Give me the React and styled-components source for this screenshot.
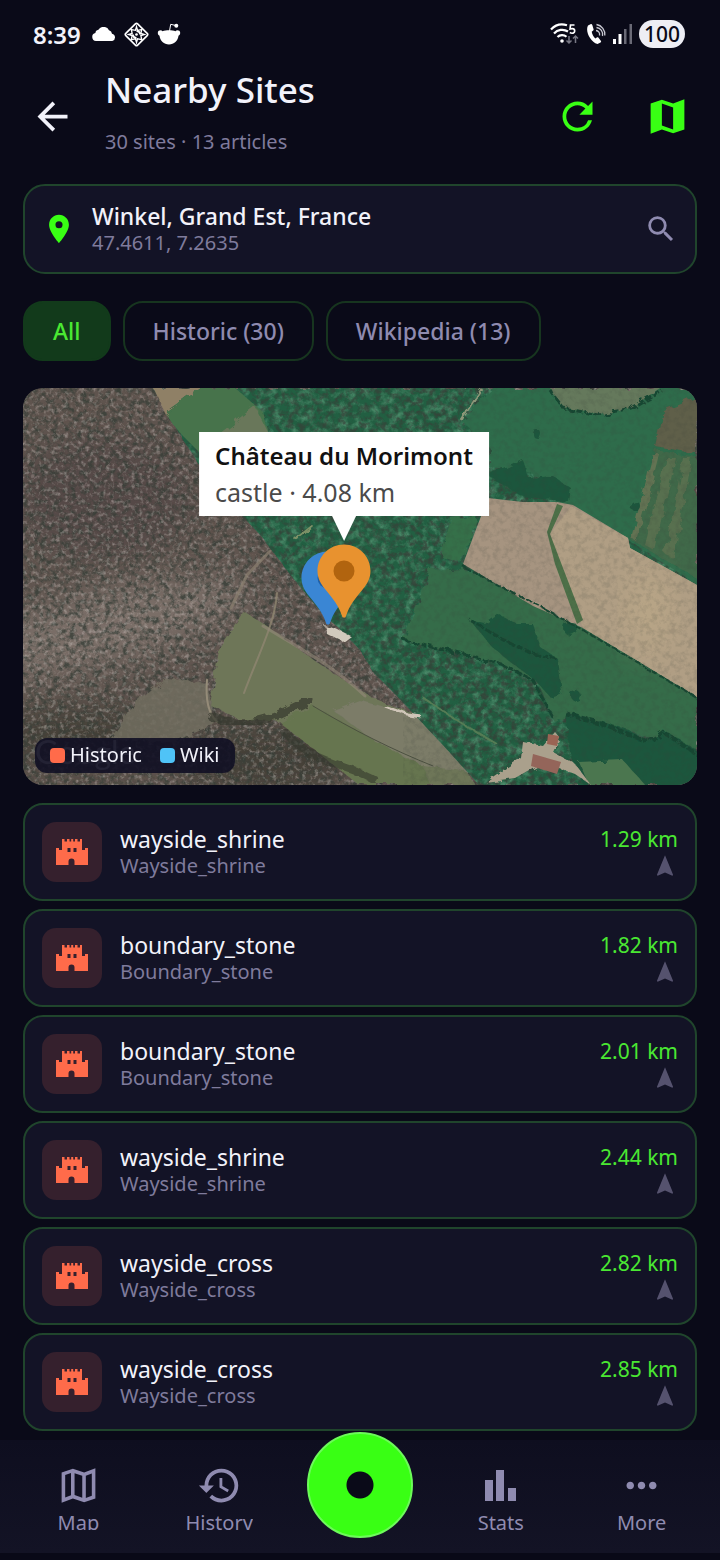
import React, { useState } from 'react';
import styled, { createGlobalStyle } from 'styled-components';
import {
  MdArrowBack,
  MdRefresh,
  MdPlace,
  MdSearch,
  MdNavigation,
  MdHistory,
  MdMoreHoriz,
} from 'react-icons/md';

const SITES = [
  { id: 1, name: 'wayside_shrine', type: 'Wayside_shrine', distance: 1.29 },
  { id: 2, name: 'boundary_stone', type: 'Boundary_stone', distance: 1.82 },
  { id: 3, name: 'boundary_stone', type: 'Boundary_stone', distance: 2.01 },
  { id: 4, name: 'wayside_shrine', type: 'Wayside_shrine', distance: 2.44 },
  { id: 5, name: 'wayside_cross', type: 'Wayside_cross', distance: 2.82 },
  { id: 6, name: 'wayside_cross', type: 'Wayside_cross', distance: 2.85 },
];

const FILTERS = ['All', 'Historic (30)', 'Wikipedia (13)'];

const MapIcon = ({ outlined }) => (
  <svg width={45} height={45} viewBox="0 0 24 24" fill="currentColor" aria-hidden="true">
    {outlined ? (
      <path
        fillRule="evenodd"
        d="M15 5.1 9 3 3 5.02v16.2l6-2.33 6 2.1 6-2.02V2.77L15 5.1zM8 17.15l-3.1 1.2V6.4L8 5.36v11.79zm6 1.35-4.1-1.43V5.42L14 6.85V18.5zm5.1-.98-3.2 1.1V6.83l3.2-1.24v11.93z"
      />
    ) : (
      <path fillRule="evenodd" d="M15 5.1 9 3 3 5.02v16.2l6-2.33 6 2.1 6-2.02V2.77L15 5.1zm0 13.79-6-2.11V5.11l6 2.11v11.67z" />
    )}
  </svg>
);

const StatsIcon = () => (
  <svg width={45} height={45} viewBox="0 0 45 45" fill="currentColor" aria-hidden="true">
    <path d="M7 17h8v21H7zM18 7h8v31h-8zM30 25h8v13h-8z" />
  </svg>
);

const CastleIcon = () => (
  <svg width={32} height={26} viewBox="0 0 32 26" fill="#ff6b4a" aria-hidden="true">
    <path
      fillRule="evenodd"
      d="M6 0h2.500v2.500H11V0h2.500v2.500h1.700V0h2v2.500H19V0h2.500v2.500H24V0h2v11h3V9h3v17H18.500v-3.500a3 3 0 0 0-6 0V26H0V9h3v2h3V0zM11.500 9v4h3V9h-3zM17.500 9v4h3V9h-3z"
    />
  </svg>
);

const CloudIcon = () => (
  <svg width={24} height={14} viewBox="0 0 24 14" fill="#fff" aria-hidden="true">
    <path d="M4 14a4 4 0 0 1-.6-7.900 3.600 3.600 0 0 1 3-3.300A6 6 0 0 1 17 3.300a4 4 0 0 1 3 3.500A3.700 3.700 0 0 1 20.300 14z" />
  </svg>
);

const DiamondIcon = () => (
  <svg width={25} height={25} viewBox="0 0 24 24" fill="none" stroke="#fff" aria-hidden="true">
    <rect x="4" y="4" width="16" height="16" rx="1.500" strokeWidth="1.600" transform="rotate(45 12 12)" />
    <path d="M12 4.500 13 8l4-.8-.8 3.800 3.300 1-3.300 1 .8 4-4-.8-1 3.300-1-3.300-4 .8.800-4-3.300-1 3.300-1L7 7.200l4 .8z" strokeWidth="1.300" />
    <path d="M12 8.500a3.500 3.500 0 0 1 3.500 3.500M12 15.500A3.500 3.500 0 0 1 8.500 12" strokeWidth="2" />
    <circle cx="12" cy="12" r="1.300" fill="#fff" stroke="none" />
  </svg>
);

const AlienIcon = () => (
  <svg width={24} height={22} viewBox="0 0 24 22" fill="#fff" aria-hidden="true">
    <path d="M.8 9.800C1 7 4.500 6.800 5.500 8.200 9 7 15 7 18.500 8.200c1-1.400 4.500-1.200 4.700 1.600.1 1.500-.8 2.500-1.700 3C21 18 17 21.500 12 21.500S3 18 2.500 12.800C1.600 12.300.7 11.300.8 9.800z" />
    <circle cx="19.300" cy="2.800" r="2" />
    <path d="m12.500 8 1.200-6.700 5 1.200" fill="none" stroke="#fff" strokeWidth="1" />
  </svg>
);

const WifiIcon = () => (
  <svg width={29} height={24} viewBox="0 0 29 24" fill="none" stroke="#fff" strokeWidth="2.200" aria-hidden="true">
    <path d="M1 7.500a15.500 15.500 0 0 1 16-4.200M4 11.500a11 11 0 0 1 14-2M7.500 15a6.500 6.500 0 0 1 9-.2" />
    <circle cx="12" cy="19" r="1.800" fill="#fff" stroke="none" />
    <path d="M24.500 3H20.500l-.4 4c3-1 4.600 0 4.600 2s-2.500 3-4.900 1.600" strokeWidth="1.700" />
    <path d="M19 14v7M16.500 18.500 19 21l2.500-2.500M25.500 21v-7M23 16.500l2.500-2.500 2.500 2.500" stroke="#777783" strokeWidth="1.500" />
  </svg>
);

const CallIcon = () => (
  <svg width={20} height={22} viewBox="0 0 20 22" aria-hidden="true">
    <path
      d="M4.500 1.200 2 2.600C-1 7.500 4 19 11.500 21l3-1.400c.8-.5.8-1.200.3-1.900l-2.300-2.900c-.5-.6-1.200-.6-1.800-.2l-1.200.8C7.600 14 6 11 5.700 8.700l1.200-.9c.7-.4.8-1 .6-1.700L6.300 2c-.3-.9-1-1.200-1.800-.8z"
      fill="#fff"
    />
    <path d="M10 7.500a4 4 0 0 1 3.500 5M10.500 4.500a7 7 0 0 1 6 8.500M10.500 1.500a10 10 0 0 1 8.300 11" fill="none" stroke="#c9c9d2" strokeWidth="1.300" />
  </svg>
);

const SignalIcon = () => (
  <svg width={19} height={20} viewBox="0 0 19 20" aria-hidden="true">
    <path d="M0 15h3v5H0zM5.500 10h3v10h-3z" fill="#fff" />
    <path d="M11 5h2.500v15H11zM16.500 0H19v20h-2.500z" fill="#6a6a76" />
  </svg>
);

const Pin = ({ fill, dot }) => (
  <svg width={54} height={74} viewBox="0 0 54 74" aria-hidden="true">
    <path d="M27 .5C12.400.5.5 12.300.5 27c0 7 3 12.500 7.500 18 6 7.500 12 14 15.500 23l1.700 4.500c.6 1.600 3 1.600 3.600 0L30.500 68C34 59 40 52.500 46 45c4.500-5.500 7.500-11 7.500-18C53.500 12.300 41.600.5 27 .5z" fill={fill} />
    <circle cx="27" cy="27" r="10.500" fill={dot} />
  </svg>
);

const WOODS =
  'M130 0H674V397H456L430 368 404 340 374 308 350 284 337 262 316 240 300 226 283 206 262 180 238 148 216 124 184 88 160 52z';

// Aerial view: woods, meadows and ploughed fields under a grain texture.
const Terrain = () => (
  <TerrainSvg viewBox="0 0 674 397" preserveAspectRatio="xMidYMid slice" role="img" aria-label="Satellite map">
    <defs>
      <filter id="grain" x="0" y="0" width="100%" height="100%">
        <feTurbulence type="fractalNoise" baseFrequency="0.17" numOctaves="4" seed="7" />
        <feColorMatrix values="0 0 0 0 0.04  0 0 0 0 0.05  0 0 0 0 0.04  3.200 0 0 0 -1.350" />
      </filter>
      <filter id="glint" x="0" y="0" width="100%" height="100%">
        <feTurbulence type="fractalNoise" baseFrequency="0.24" numOctaves="3" seed="21" />
        <feColorMatrix values="0 0 0 0 0.66  0 0 0 0 0.6  0 0 0 0 0.57  0 2.800 0 0 -1.350" />
      </filter>
      <filter id="leaf" x="0" y="0" width="100%" height="100%">
        <feTurbulence type="fractalNoise" baseFrequency="0.12" numOctaves="4" seed="4" />
        <feColorMatrix values="0 0 0 0 0.18  0 0 0 0 0.47  0 0 0 0 0.29  0 2.400 0 0 -1" />
      </filter>
      <filter id="rough" x="-5%" y="-5%" width="110%" height="110%">
        <feTurbulence type="fractalNoise" baseFrequency="0.09" numOctaves="3" seed="3" />
        <feDisplacementMap in="SourceGraphic" scale="9" />
      </filter>
      <filter id="haze" x="-30%" y="-30%" width="160%" height="160%">
        <feGaussianBlur stdDeviation="16" />
      </filter>
      <clipPath id="woods">
        <path d={WOODS} />
      </clipPath>
    </defs>

    <rect width="674" height="397" fill="#5f544e" />
    <g filter="url(#haze)">
      <ellipse cx="80" cy="240" rx="150" ry="36" fill="#7a6e68" transform="rotate(-14 80 240)" />
      <ellipse cx="80" cy="110" rx="90" ry="60" fill="#544a46" />
      <ellipse cx="60" cy="350" rx="90" ry="30" fill="#453f38" />
      <ellipse cx="240" cy="372" rx="90" ry="34" fill="#453f37" />
    </g>
    <rect width="674" height="397" filter="url(#grain)" opacity="0.800" />
    <rect width="674" height="397" filter="url(#glint)" opacity="0.400" />

    <g filter="url(#rough)">
      <path d="M144 290 184 296 192 336 150 354 88 350 112 316z" fill="#716d5f" opacity="0.850" />
      <path d="M222 224 244 238 274 260 314 288 350 310 403 330 426 356 452 397H336L297 366 257 334 214 330 187 317 196 262z" fill="#6e7659" />
      <path d="M258 336 290 318 330 340 400 378 408 397H336L297 366z" fill="#66744f" />
      <path d="M336 312 403 332 450 384 400 378 350 352 310 322z" fill="#7b7b68" />
    </g>
    <g fill="none" strokeLinecap="round">
      <path d="M247 163 224 187 208 220" stroke="#8b8070" strokeWidth="3" opacity="0.700" />
      <path d="M254 205c-2 30-18 60-33 100" stroke="#8f8671" strokeWidth="2" opacity="0.800" />
      <path d="M184 292c-2 22 2 34 10 42" stroke="#948b78" strokeWidth="2" />
      <path d="M240 238c40 24 70 40 102 70" stroke="#94887a" strokeWidth="3" opacity="0.600" />
      <path d="M290 318c40 24 80 44 120 60" stroke="#4c5140" strokeWidth="1" />
      <path d="M190 330c30 12 60 2 96-18" stroke="#36392d" strokeWidth="9" opacity="0.700" filter="url(#rough)" />
      <path d="M262 344c30 34 60 30 90 48" stroke="#36392d" strokeWidth="8" opacity="0.600" filter="url(#rough)" />
    </g>

    <path d={WOODS} fill="#215e43" filter="url(#rough)" />
    <g clipPath="url(#woods)">
      <rect x="120" width="554" height="397" filter="url(#leaf)" opacity="0.500" />
      <rect x="120" width="554" height="397" filter="url(#grain)" opacity="0.700" />
    </g>

    <g filter="url(#rough)">
      <path d="M130 0H178L142 26z" fill="#8f8066" />
      <path d="M178 0H212L240 24 246 46 200 46 200 76 176 64 158 46 142 26z" fill="#46734c" />
      <path d="M232 18 246 46H196z" fill="#69775a" />
      <path d="M468 0 440 34 467 60 467 80 500 84 537 96 537 114 605 152 674 197V0z" fill="#2d6c4b" />
      <path d="M527 0 540 20 575 26 605 22 637 0z" fill="#65795c" />
      <path d="M640 22 674 8V66L632 58z" fill="#5f5e48" />
      <path d="M633 62 674 70V190L608 152z" fill="#41694a" />
      <path d="M644 70h9l-22 92-9-5zM660 70h9l-18 100-9-4z" fill="#58704f" />
      <path d="M630 66h6l-22 88-6-4z" fill="#637353" />
      <path d="M428 130 455 128 440 175 418 168z" fill="#35704a" />
      <path d="M408 182 440 180 560 240 674 309V362L626 350 606 342 546 328 532 334 514 292 478 276 430 264 380 252z" fill="#366c4a" />
    </g>

    <path d="M465 110 500 114 534 114 550 117 605 150 607 160 674 197V309L620 276 560 240 510 218 440 176 452 144z" fill="#a69480" />
    <path d="M548 118 605 150 607 160 674 197V309L620 276 560 240 538 180 527 146z" fill="#b09e84" />
    <path d="M534 116 524 144 532 176 554 236 560 232 540 180 527 146 540 118z" fill="#4d7048" />
    <g filter="url(#haze)" opacity="0.400">
      <ellipse cx="626" cy="224" rx="20" ry="40" fill="#c8b38c" />
    </g>

    <g fill="#1f563c" filter="url(#rough)">
      <path d="M447 232 462 236 476 226 494 236 510 236 518 260 536 272 540 306 528 310 512 292 490 276 468 258z" />
      <path d="M466 88 500 72 506 90 530 88 548 100 546 114 498 108z" />
      <path d="M542 326 580 334 606 342 626 354 640 342 674 362V397H560L548 366z" />
      <circle cx="514" cy="46" r="4" />
      <circle cx="612" cy="118" r="5" />
      <circle cx="547" cy="240" r="7" />
      <circle cx="553" cy="308" r="5" />
    </g>
    <g fill="none" stroke="#184632" strokeDasharray="7 2" filter="url(#rough)">
      <path d="M380 252 430 264 478 276 510 292 530 330" strokeWidth="3" />
      <path d="M447 232 480 252 510 266 536 272" strokeWidth="3" />
      <path d="M440 178 480 200 520 220 560 242 620 278 674 310" strokeWidth="2" />
      <path d="M542 326 580 336 626 354 640 344 674 366" strokeWidth="4" />
      <path d="M527 2 540 20 575 27 608 20 638 2" strokeWidth="3" />
    </g>
    <rect x="380" width="294" height="397" filter="url(#grain)" opacity="0.140" />

    <g filter="url(#rough)">
      <path d="M556 374 600 372 622 397H566z" fill="#4c7650" />
      <path d="M500 354 520 358 532 344 537 350 530 364 552 376 568 397 552 386 520 374 492 390 462 394 498 370z" fill="#aaa08c" />
      <path d="M300 236 312 240 328 248 320 254 304 246z" fill="#d2cabd" />
      <path d="M362 318 384 326 398 328" fill="none" stroke="#cfc5b8" strokeWidth="3" />
      <path d="M400 310 440 336 474 356" fill="none" stroke="#557c54" strokeWidth="2" />
      <path d="M458 0 438 32" fill="none" stroke="#8c9678" strokeWidth="3" />
      <path d="M272 152 290 138" fill="none" stroke="#7c9066" strokeWidth="3" />
    </g>
    <path d="M510 366 538 374 534 386 508 378z" fill="#94655a" />
    <path d="M525 346 536 348 534 358 524 356z" fill="#9a6454" />
    <text x="12" y="376" fill="#fff" opacity="0.700" fontFamily="Lato, sans-serif" fontSize="32">
      Google
    </text>
  </TerrainSvg>
);

const SiteRow = ({ site }) => (
  <li>
    <Row href={`#site-${site.id}`}>
      <Tile>
        <CastleIcon />
      </Tile>
      <RowText>
        <SiteName>{site.name}</SiteName>
        <Muted>{site.type}</Muted>
      </RowText>
      <RowSide>
        <Distance>{site.distance.toFixed(2)} km</Distance>
        <MdNavigation size={26} color="#55526e" />
      </RowSide>
    </Row>
  </li>
);

const App = () => {
  const [filter, setFilter] = useState('All');

  return (
    <Screen>
      <GlobalStyle />
      <StatusBar>
        <StatusGroup $gap={8}>
          <Clock>8:39</Clock>
          <CloudIcon />
          <DiamondIcon />
          <AlienIcon />
        </StatusGroup>
        <StatusGroup $gap={7}>
          <WifiIcon />
          <CallIcon />
          <SignalIcon />
          <Battery>100</Battery>
        </StatusGroup>
      </StatusBar>

      <Header>
        <IconButton $color="#f2f2fa" aria-label="Back">
          <MdArrowBack size={45} />
        </IconButton>
        <Titles>
          <Title>Nearby Sites</Title>
          <Subtitle>30 sites · 13 articles</Subtitle>
        </Titles>
        <Actions>
          <IconButton $color="#39ff14" aria-label="Refresh">
            <MdRefresh size={45} />
          </IconButton>
          <IconButton $color="#39ff14" aria-label="Show map">
            <MapIcon />
          </IconButton>
        </Actions>
      </Header>

      <Content>
        <LocationCard>
          <MdPlace size={34} color="#39ff14" />
          <RowText>
            <Place>Winkel, Grand Est, France</Place>
            <Muted>47.4611, 7.2635</Muted>
          </RowText>
          <MdSearch size={34} color="#8f8bb0" />
        </LocationCard>

        <Chips>
          {FILTERS.map((label) => (
            <Chip key={label} $active={label === filter} aria-pressed={label === filter} onClick={() => setFilter(label)}>
              {label}
            </Chip>
          ))}
        </Chips>

        <MapCard>
          <Terrain />
          <Marker $x={-32} $y={163}>
            <Pin fill="#3a86d4" dot="#1f5fa5" />
          </Marker>
          <Marker $x={-16} $y={156}>
            <Pin fill="#e8922f" dot="#b1640f" />
          </Marker>
          <Callout>
            <CalloutTitle>Château du Morimont</CalloutTitle>
            <CalloutText>castle · 4.08 km</CalloutText>
          </Callout>
          <Legend>
            <LegendItem $color="#ff6b4a">Historic</LegendItem>
            <LegendItem $color="#4fc3f7">Wiki</LegendItem>
          </Legend>
        </MapCard>

        <List>
          {SITES.map((site) => (
            <SiteRow key={site.id} site={site} />
          ))}
        </List>
      </Content>

      <TabBar>
        <Tab href="#map">
          <MapIcon outlined />
          <TabLabel>Map</TabLabel>
        </Tab>
        <Tab href="#history">
          <MdHistory size={45} />
          <TabLabel>History</TabLabel>
        </Tab>
        <TabCenter>
          <Record aria-label="Record" />
        </TabCenter>
        <Tab href="#stats">
          <StatsIcon />
          <TabLabel>Stats</TabLabel>
        </Tab>
        <Tab href="#more">
          <MdMoreHoriz size={45} />
          <TabLabel>More</TabLabel>
        </Tab>
      </TabBar>
    </Screen>
  );
};

const GlobalStyle = createGlobalStyle`
  * {
    box-sizing: border-box;
  }
  body {
    margin: 0;
    background: #0a0a18;
    color: #f2f2fa;
    font-family: 'Noto Sans', 'Open Sans', sans-serif;
  }
  button {
    font-family: inherit;
    cursor: pointer;
  }
  svg {
    display: block;
    flex-shrink: 0;
  }
`;

const Screen = styled.div`
  display: flex;
  flex-direction: column;
  min-height: 100vh;
`;

const StatusBar = styled.div`
  display: flex;
  justify-content: space-between;
  align-items: center;
  height: 68px;
  padding: 0 35px 0 33px;
`;

const StatusGroup = styled.div`
  display: flex;
  align-items: center;
  gap: ${({ $gap }) => $gap}px;
`;

const Clock = styled.span`
  margin-right: 3px;
  font-size: 24px;
  font-weight: 600;
`;

const Battery = styled.span`
  padding: 0 5px;
  border-radius: 14px;
  background: #eeeef4;
  color: #0a0a18;
  font-size: 21px;
  font-weight: 500;
  line-height: 28px;
`;

const Header = styled.header`
  display: flex;
  align-items: center;
  padding: 0 30px;
`;

const IconButton = styled.button`
  display: flex;
  padding: 0;
  border: 0;
  background: none;
  color: ${({ $color }) => $color};
`;

const Titles = styled.div`
  flex: 1;
  margin-left: 30px;
  padding-bottom: 8px;
`;

const Title = styled.h1`
  margin: 0 0 16px;
  font-size: 35px;
  font-weight: 500;
  line-height: 44px;
`;

const Subtitle = styled.p`
  margin: 0;
  color: #7f7b9c;
  font-size: 20px;
  line-height: 28px;
`;

const Actions = styled.div`
  display: flex;
  gap: 45px;
`;

const Content = styled.main`
  flex: 1;
  padding: 20px 23px 9px;
`;

const LocationCard = styled.button`
  display: flex;
  align-items: center;
  width: 100%;
  padding: 16px 17px;
  border: 2px solid #20452c;
  border-radius: 22px;
  background: #131326;
  color: inherit;
  text-align: left;
`;

const RowText = styled.span`
  display: flex;
  flex: 1;
  flex-direction: column;
  margin-left: 16px;
`;

const Place = styled.span`
  font-size: 23px;
  font-weight: 500;
  line-height: 28px;
`;

const SiteName = styled.span`
  font-size: 23px;
  line-height: 28px;
`;

const Muted = styled.span`
  color: #7f7b9c;
  font-size: 20px;
  line-height: 26px;
`;

const Chips = styled.div`
  display: flex;
  gap: 12px;
  margin: 27px 0;
`;

const Chip = styled.button`
  height: 60px;
  padding: 0 28px;
  border: 2px solid ${({ $active }) => ($active ? '#123a1b' : '#17351f')};
  border-radius: 20px;
  background: ${({ $active }) => ($active ? '#123a1b' : 'transparent')};
  color: ${({ $active }) => ($active ? '#4ae832' : '#8f8bb0')};
  font-size: 23px;
  font-weight: 500;
  line-height: 54px;
`;

const MapCard = styled.section`
  position: relative;
  height: 397px;
  border-radius: 20px;
  overflow: hidden;
`;

const TerrainSvg = styled.svg`
  width: 100%;
  height: 100%;
`;

const Marker = styled.div`
  position: absolute;
  top: ${({ $y }) => $y}px;
  left: calc(50% + ${({ $x }) => $x}px);
  transform: translateX(-50%);
`;

const Callout = styled.div`
  position: absolute;
  top: 44px;
  left: calc(50% - 16px);
  transform: translateX(-50%);
  padding: 6px 16px;
  background: #fff;
  white-space: nowrap;

  &::after {
    content: '';
    position: absolute;
    top: 100%;
    left: calc(50% - 12px);
    border: 12px solid transparent;
    border-top: 25px solid #fff;
    border-bottom: 0;
  }
`;

const CalloutTitle = styled.div`
  color: #111;
  font-size: 24px;
  font-weight: 600;
  line-height: 36px;
`;

const CalloutText = styled.div`
  color: #4a4a4a;
  font-size: 25px;
  line-height: 36px;
`;

const Legend = styled.div`
  position: absolute;
  bottom: 12px;
  left: 12px;
  display: flex;
  gap: 18px;
  padding: 4px 15px 5px;
  border-radius: 12px;
  background: rgba(17, 16, 36, 0.9);
`;

const LegendItem = styled.span`
  display: flex;
  align-items: center;
  gap: 5px;
  font-size: 20px;
  line-height: 26px;

  &::before {
    content: '';
    width: 15px;
    height: 15px;
    border-radius: 4px;
    background: ${({ $color }) => $color};
  }
`;

const List = styled.ul`
  display: flex;
  flex-direction: column;
  gap: 8px;
  margin: 18px 0 0;
  padding: 0;
  list-style: none;
`;

const Row = styled.a`
  display: flex;
  align-items: center;
  padding: 17px;
  border: 2px solid #20452c;
  border-radius: 20px;
  background: #131326;
  color: inherit;
  text-decoration: none;
`;

const Tile = styled.span`
  display: flex;
  align-items: center;
  justify-content: center;
  width: 60px;
  height: 60px;
  margin-right: 2px;
  border-radius: 14px;
  background: #35202d;
`;

const RowSide = styled.span`
  display: flex;
  flex-direction: column;
  align-items: flex-end;
`;

const Distance = styled.span`
  color: #4ae832;
  font-size: 21px;
  line-height: 28px;
`;

const TabBar = styled.nav`
  position: sticky;
  bottom: 0;
  display: flex;
  height: 120px;
  padding: 23px 8px 0;
  border-bottom: 7px solid #090917;
  background: linear-gradient(#0e0e1f, #131325);
`;

const Tab = styled.a`
  display: flex;
  flex: 1;
  flex-direction: column;
  align-items: center;
  color: #8f8bb0;
  text-decoration: none;
`;

const TabLabel = styled.span`
  height: 22px;
  overflow: hidden;
  font-size: 20px;
  line-height: 30px;
`;

const TabCenter = styled.div`
  display: flex;
  flex: 1;
  justify-content: center;
`;

const Record = styled.button`
  width: 106px;
  height: 106px;
  margin-top: -31px;
  padding: 0;
  border: 2px solid #6dfa5a;
  border-radius: 50%;
  background: radial-gradient(circle, #0a0a18 0 13px, #39ff14 14px);
`;

export default App;
